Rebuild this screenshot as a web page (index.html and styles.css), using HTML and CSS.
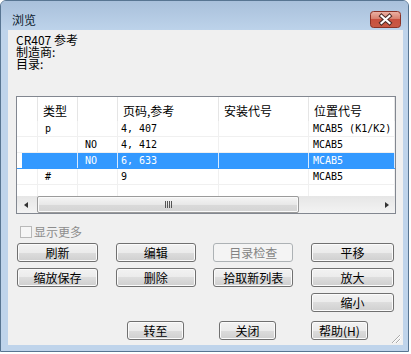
FILE: index.html
```html
<!DOCTYPE html>
<html lang="zh">
<head>
  <meta charset="utf-8">
  <title>浏览</title>
  <link rel="stylesheet" href="styles.css">
</head>
<body>

  <div class="window">
    <div class="titlebar">
      <span class="title">浏览</span>
      <div class="close-btn">
        <svg width="31" height="17" viewBox="0 0 31 17">
          <defs>
            <linearGradient id="closeGrad" x1="0" y1="0" x2="0" y2="1">
              <stop offset="0" stop-color="#ecb4a7"/>
              <stop offset="0.45" stop-color="#d8816f"/>
              <stop offset="0.5" stop-color="#c9503e"/>
              <stop offset="1" stop-color="#c85a45"/>
            </linearGradient>
          </defs>
          <rect x="0.5" y="0.5" width="30" height="16" rx="3" fill="url(#closeGrad)" stroke="#8a3226"/>
          <path d="M11.5 5 L19.5 12 M19.5 5 L11.5 12" stroke="#4d2b27" stroke-width="4.2" stroke-linecap="square"/>
          <path d="M11.5 5 L19.5 12 M19.5 5 L11.5 12" stroke="#fff" stroke-width="2.2" stroke-linecap="square"/>
        </svg>
      </div>
    </div>

    <div class="client">
      <div class="info">
        <div>CR407 参考</div>
        <div>制造商:</div>
        <div>目录:</div>
      </div>

      <!-- List of references -->
      <div class="listview">
        <div class="lv-header">
          <div class="col"></div>
          <div class="col">类型</div>
          <div class="col"></div>
          <div class="col">页码,参考</div>
          <div class="col">安装代号</div>
          <div class="col">位置代号</div>
        </div>
        <div class="lv-body">
          <div class="lv-row">
            <div class="cell"></div>
            <div class="cell">p</div>
            <div class="cell"></div>
            <div class="cell num">4, 407</div>
            <div class="cell"></div>
            <div class="cell loc">MCAB5 (K1/K2)</div>
          </div>
          <div class="lv-row">
            <div class="cell"></div>
            <div class="cell"></div>
            <div class="cell">NO</div>
            <div class="cell num">4, 412</div>
            <div class="cell"></div>
            <div class="cell loc">MCAB5</div>
          </div>
          <div class="lv-row selected">
            <div class="cell"></div>
            <div class="cell"></div>
            <div class="cell">NO</div>
            <div class="cell num">6, 633</div>
            <div class="cell"></div>
            <div class="cell loc">MCAB5</div>
          </div>
          <div class="lv-row">
            <div class="cell"></div>
            <div class="cell">#</div>
            <div class="cell"></div>
            <div class="cell num">9</div>
            <div class="cell"></div>
            <div class="cell loc">MCAB5</div>
          </div>
          <div class="lv-row">
            <div class="cell"></div>
            <div class="cell"></div>
            <div class="cell"></div>
            <div class="cell"></div>
            <div class="cell"></div>
            <div class="cell"></div>
          </div>
        </div>
        <div class="hscroll">
          <div class="arrow"><span class="tri-left"></span></div>
          <div class="track">
            <div class="thumb"><span class="thumb-grip"></span></div>
          </div>
          <div class="arrow"><span class="tri-right"></span></div>
        </div>
      </div>

      <label class="check disabled"><span class="box"></span>显示更多</label>

      <div class="btn-grid">
        <button class="btn">刷新</button>
        <button class="btn">编辑</button>
        <button class="btn" disabled>目录检查</button>
        <button class="btn">平移</button>
        <button class="btn">缩放保存</button>
        <button class="btn">删除</button>
        <button class="btn">拾取新列表</button>
        <button class="btn">放大</button>
        <button class="btn zoom-out">缩小</button>
      </div>

      <div class="btn-row">
        <button class="btn small">转至</button>
        <button class="btn small">关闭</button>
        <button class="btn small">帮助(H)</button>
      </div>

      <svg class="size-grip" width="12" height="12" viewBox="0 0 12 12">
        <path d="M11 3 L3 11 M11 7 L7 11 M11 11 L11 11" stroke="#fff" stroke-width="1"/>
        <path d="M10 3 L2 11 M10 7 L6 11" stroke="#a9a9a9" stroke-width="1"/>
      </svg>
    </div>
  </div>

</body>
</html>
```

FILE: styles.css
```css
/* Dialog window */
body {
  margin: 0;
  background: #fff;
  font-family: "Noto Sans CJK SC", sans-serif;
  font-size: 12px;
  color: #000;
}

.window {
  width: 409px;
  height: 352px;
  box-sizing: border-box;
  border: 1px solid #587592;
  border-radius: 6px 6px 0 0;
  background: #bfd4eb;
}

.titlebar {
  height: 29px;
  box-sizing: border-box;
  display: flex;
  align-items: center;
  justify-content: space-between;
  padding: 9px 7px 1px 11px;
  background: linear-gradient(#a9c0db, #bdd3ea);
  border-radius: 5px 5px 0 0;
}

.title {
  line-height: 14px;
  color: #0b1a2c;
}

.close-btn {
  width: 31px;
  height: 17px;
}

.close-btn svg {
  display: block;
}

.client {
  position: relative;
  margin-left: 7px;
  width: 395px;
  height: 315px;
  background: #f0f0f0;
}

.info {
  height: 66px;
  box-sizing: border-box;
  padding: 4px 8px 0;
  line-height: 12px;
}

/* List view */
.listview {
  margin-left: 8px;
  width: 380px;
  height: 118px;
  box-sizing: border-box;
  border: 1px solid #828790;
  background: #fff;
  overflow: hidden;
}

.lv-header, .lv-row {
  display: grid;
  grid-template-columns: 21px 40px 40px 101px 90px 1fr;
}

.lv-header {
  height: 24px;
}

.lv-header .col {
  box-sizing: border-box;
  border-right: 1px solid #e5e5e5;
  padding: 6px 0 0 5px;
  line-height: 16px;
  white-space: nowrap;
}

.lv-body {
  height: 75px;
  overflow: hidden;
}

.lv-row {
  height: 16px;
  box-sizing: border-box;
  border-bottom: 1px solid #f0f0f0;
  font-family: "DejaVu Sans Mono", monospace;
  font-size: 10px;
  line-height: 16px;
}

.lv-row .cell {
  box-sizing: border-box;
  border-right: 1px solid #f0f0f0;
  padding-left: 7px;
  white-space: nowrap;
  overflow: hidden;
}

.lv-row .num {
  padding-left: 3px;
}

.lv-row .loc {
  padding-left: 4px;
}

.lv-row.selected {
  background: #3399ff;
  color: #fff;
  border-bottom-color: #3399ff;
}

.lv-row.selected .cell {
  border-right-color: #d6e9ff;
}

.lv-row.selected .cell:first-child {
  background: linear-gradient(to right, #fff 5px, #3399ff 5px);
  border-right-color: #3399ff;
}

/* Horizontal scrollbar */
.hscroll {
  height: 17px;
  display: flex;
  background: linear-gradient(#e6e6e6, #f3f3f3);
}

.arrow {
  width: 17px;
  display: flex;
  align-items: center;
  justify-content: center;
}

.tri-left, .tri-right {
  width: 0;
  height: 0;
  border-style: solid;
}

.tri-left {
  border-width: 3.5px 4px 3.5px 0;
  border-color: transparent #333 transparent transparent;
}

.tri-right {
  border-width: 3.5px 0 3.5px 4px;
  border-color: transparent transparent transparent #333;
}

.track {
  flex: 1;
  padding: 0 0 0 3px;
}

.thumb {
  width: 262px;
  height: 17px;
  box-sizing: border-box;
  border: 1px solid #9b9b9b;
  border-radius: 2px;
  background: linear-gradient(#f5f5f5, #e8e8e8 50%, #dadada 50%, #d4d4d4);
  box-shadow: inset 0 0 0 1px #fafafa;
  display: flex;
  align-items: center;
  justify-content: center;
}

.thumb-grip {
  width: 7px;
  height: 7px;
  background: repeating-linear-gradient(to right, #555 0 1px, transparent 1px 2px);
}

/* Checkbox */
.check {
  display: flex;
  align-items: center;
  margin: 11px 0 0 12px;
  height: 13px;
  line-height: 13px;
}

.check .box {
  width: 12px;
  height: 12px;
  box-sizing: border-box;
  border: 1px solid #b9b9b9;
  background: #f6f6f6;
  margin-right: 2px;
}

.check.disabled {
  color: #8d8d8d;
}

/* Buttons */
.btn-grid {
  display: grid;
  grid-template-columns: 81px 80px 80px 83px;
  grid-template-rows: 19px 19px 19px;
  justify-content: space-between;
  row-gap: 6px;
  width: 377px;
  margin: 5px 0 0 9px;
}

.btn-grid .zoom-out {
  grid-column: 4;
}

.btn-row {
  display: flex;
  gap: 35px;
  margin: 9px 0 0 119px;
}

.btn {
  height: 19px;
  box-sizing: border-box;
  border: 1px solid #707070;
  border-radius: 3px;
  background: linear-gradient(#f2f2f2, #ebebeb 50%, #dddddd 50%, #cfcfcf);
  box-shadow: inset 0 0 0 1px #fbfbfb;
  font-family: "Noto Sans CJK SC", sans-serif;
  font-size: 12px;
  line-height: 17px;
  color: #000;
  padding: 0;
}

.btn:disabled {
  border-color: #adb2b5;
  background: #f4f4f4;
  box-shadow: none;
  color: #838383;
}

.btn.small {
  width: 57px;
}

.size-grip {
  position: absolute;
  right: 1px;
  bottom: 1px;
}
```
